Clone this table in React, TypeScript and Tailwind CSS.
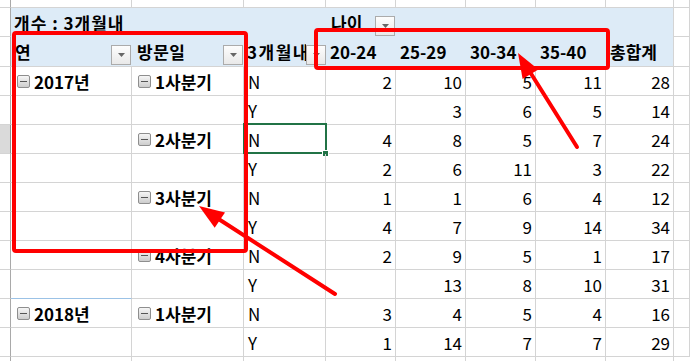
import React from 'react';

type DataRow = { year?: string; quarter?: string; flag: string; vals: (number | null)[] };

const rows: DataRow[] = [
    { year: '2017년', quarter: '1사분기', flag: 'N', vals: [2, 10, 5, 11, 28] },
    { flag: 'Y', vals: [null, 3, 6, 5, 14] },
    { quarter: '2사분기', flag: 'N', vals: [4, 8, 5, 7, 24] },
    { flag: 'Y', vals: [2, 6, 11, 3, 22] },
    { quarter: '3사분기', flag: 'N', vals: [1, 1, 6, 4, 12] },
    { flag: 'Y', vals: [4, 7, 9, 14, 34] },
    { quarter: '4사분기', flag: 'N', vals: [2, 9, 5, 1, 17] },
    { flag: 'Y', vals: [null, 13, 8, 10, 31] },
    { year: '2018년', quarter: '1사분기', flag: 'N', vals: [3, 4, 5, 4, 16] },
    { flag: 'Y', vals: [1, 14, 7, 7, 29] },
];

const numCols = ['w-[70px]', 'w-[70px]', 'w-[70px]', 'w-[70px]', 'w-[68px]'];
const ageLabels = ['20-24', '25-29', '30-34', '35-40', '총합계'];

const grid = 'border-r border-b border-[#d4d4d4]';

function Dropdown() {
    return (
        <span className="shrink-0 self-end w-[20px] h-[20px] border border-[#ababab] bg-linear-to-b from-[#fdfdfd] to-[#e9e9e9] flex items-center justify-center">
            <svg width="7" height="4" viewBox="0 0 7 4">
                <polygon points="0,0 7,0 3.5,4" fill="#666" />
            </svg>
        </span>
    );
}

function Toggle() {
    return (
        <span className="shrink-0 w-[13px] h-[13px] rounded-[2px] border border-[#8e8e8e] bg-linear-to-b from-[#f6f6f6] to-[#cdcdcd] flex items-center justify-center">
            <span className="w-[7px] h-px bg-[#555]" />
        </span>
    );
}

function RowHead({ selected }: { selected?: boolean }) {
    return (
        <div
            className={`w-[11px] shrink-0 border-b border-r border-b-[#d4d4d4] ${
                selected ? 'bg-[#dadada] border-r-[#8c8c8c]' : 'border-r-[#a9a9a9]'
            }`}
        />
    );
}

export default function App() {
    return (
        <div className="relative w-[690px] h-[361px] overflow-hidden bg-white text-black font-['Noto_Sans_CJK_KR','Noto_Sans',sans-serif] text-[17px] leading-[29px]">
            {/* top partial row */}
            <div className="flex h-[8px]">
                <RowHead />
                <div className={`w-[121px] ${grid}`} />
                <div className={`w-[112px] ${grid}`} />
                <div className={`w-[82px] ${grid}`} />
                {numCols.map((w, i) => (
                    <div key={i} className={`${w} ${grid}`} />
                ))}
                <div className={`flex-1 ${grid}`} />
            </div>

            {/* pivot header row 1 */}
            <div className="flex h-[29px]">
                <div className="w-[11px] shrink-0 border-b border-r border-b-[#d4d4d4] border-r-[#a9a9a9]" />
                <div className="w-[121px] bg-[#ddebf7] pl-[3px] font-bold whitespace-nowrap tracking-[1px]">개수 : 3개월내</div>
                <div className="w-[112px] bg-[#ddebf7]" />
                <div className="w-[82px] bg-[#ddebf7]" />
                <div className="w-[70px] bg-[#ddebf7] flex pl-[5px] pr-[1px] pb-[1px]">
                    <span className="flex-1 font-bold">나이</span>
                    <Dropdown />
                </div>
                <div className="w-[70px] bg-[#ddebf7]" />
                <div className="w-[70px] bg-[#ddebf7]" />
                <div className="w-[70px] bg-[#ddebf7]" />
                <div className="w-[68px] bg-[#ddebf7] border-r border-[#d4d4d4]" />
                <div className={`flex-1 ${grid}`} />
            </div>

            {/* pivot header row 2 */}
            <div className="flex h-[30px]">
                <div className="w-[11px] shrink-0 border-b border-r border-b-[#d4d4d4] border-r-[#a9a9a9]" />
                <div className="w-[121px] bg-[#ddebf7] border-b border-[#d4d4d4] flex pl-[4px] pr-[1px] pb-[1px] font-bold">
                    <span className="flex-1">연</span>
                    <Dropdown />
                </div>
                <div className="w-[112px] bg-[#ddebf7] border-b border-[#d4d4d4] flex pl-[5px] pr-[1px] pb-[1px] font-bold">
                    <span className="flex-1 tracking-[0.5px]">방문일</span>
                    <Dropdown />
                </div>
                <div className="w-[82px] bg-[#ddebf7] border-b border-[#d4d4d4] flex pl-[3px] pb-[1px] font-bold">
                    <span className="flex-1 min-w-0 overflow-hidden whitespace-nowrap tracking-[1.5px]">3개월내</span>
                    <Dropdown />
                </div>
                {ageLabels.map((label, i) => (
                    <div
                        key={label}
                        className={`${numCols[i]} bg-[#ddebf7] border-b border-[#d4d4d4] pl-[4px] font-bold whitespace-nowrap ${
                            i === 4 ? 'border-r' : ''
                        }`}
                    >
                        {label}
                    </div>
                ))}
                <div className={`flex-1 ${grid}`} />
            </div>

            {/* data rows */}
            {rows.map((r, idx) => (
                <div key={idx} className="flex h-[29px]">
                    <RowHead selected={idx === 2} />
                    <div
                        className={`w-[121px] border-r border-b border-r-[#d4d4d4] flex items-center gap-[4px] pl-[6px] font-bold ${
                            idx === 7 ? 'border-b-[#9bc2e6]' : 'border-b-[#d4d4d4]'
                        }`}
                    >
                        {r.year && (
                            <>
                                <Toggle />
                                <span>{r.year}</span>
                            </>
                        )}
                    </div>
                    <div className={`w-[112px] ${grid} flex items-center gap-[4px] pl-[6px] font-bold`}>
                        {r.quarter && (
                            <>
                                <Toggle />
                                <span>{r.quarter}</span>
                            </>
                        )}
                    </div>
                    <div className={`relative w-[82px] ${grid} pl-[4px]`}>
                        {r.flag}
                        {idx === 2 && (
                            <>
                                <div className="absolute -left-[1px] -top-[2px] w-[84px] h-[31px] border-2 border-[#217346]" />
                                <div className="absolute -right-[4px] -bottom-[4px] w-[7px] h-[7px] bg-[#217346] border border-white" />
                            </>
                        )}
                    </div>
                    {r.vals.map((v, i) => (
                        <div key={i} className={`${numCols[i]} ${grid} text-right pr-[3px]`}>
                            {v ?? ''}
                        </div>
                    ))}
                    <div className={`flex-1 ${grid}`} />
                </div>
            ))}

            {/* bottom partial row */}
            <div className="flex h-[20px]">
                <div className="w-[11px] shrink-0 border-r border-[#a9a9a9]" />
                <div className="w-[121px] border-r border-[#d4d4d4]" />
                <div className="w-[112px] border-r border-[#d4d4d4]" />
                <div className="w-[82px] border-r border-[#d4d4d4]" />
                {numCols.map((w, i) => (
                    <div key={i} className={`${w} border-r border-[#d4d4d4]`} />
                ))}
                <div className="flex-1" />
            </div>

            {/* red annotations */}
            <svg className="absolute inset-0 pointer-events-none" width="690" height="361" viewBox="0 0 690 361">
                <rect x="14" y="33" width="232" height="218" rx="2" fill="none" stroke="#ff0000" strokeWidth="4" />
                <rect x="316" y="30" width="292" height="38" rx="2" fill="none" stroke="#ff0000" strokeWidth="4" />
                <line x1="335" y1="294" x2="217" y2="218" stroke="#ff0000" strokeWidth="4" strokeLinecap="round" />
                <polygon points="199,206 214.7,227.8 225.0,212.4" fill="#ff0000" />
                <line x1="577" y1="147" x2="530" y2="72" stroke="#ff0000" strokeWidth="4" strokeLinecap="round" />
                <polygon points="518,53 522.6,79.0 538.4,69.4" fill="#ff0000" />
            </svg>
        </div>
    );
}
